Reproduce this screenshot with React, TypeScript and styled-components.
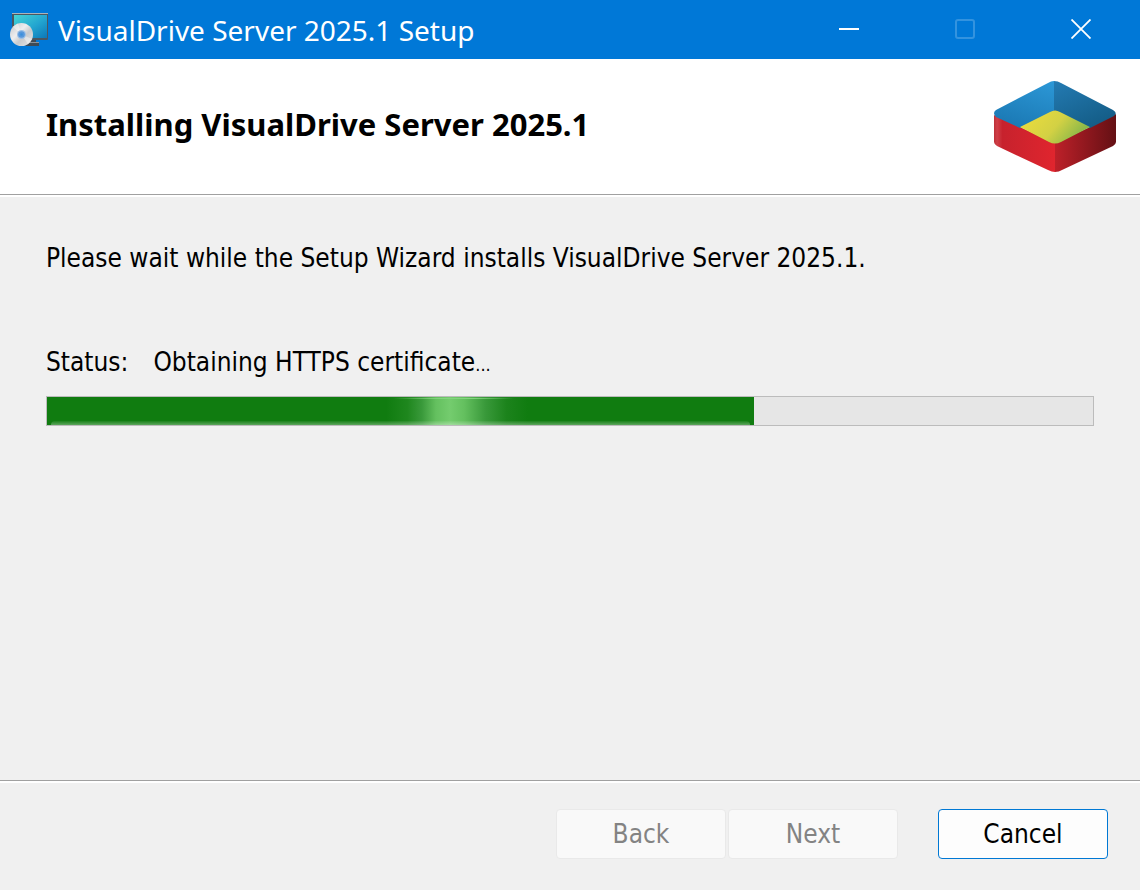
import React from "react";
import styled, { createGlobalStyle } from "styled-components";

const GlobalStyle = createGlobalStyle`
  * { box-sizing: border-box; }
  body { margin: 0; background: #f0f0f0; }
`;

const uiFont = `"DejaVu Sans Condensed", "DejaVu Sans", Tahoma, sans-serif`;

const Window = styled.div`
  display: flex;
  flex-direction: column;
  min-height: 100vh;
  background: #f0f0f0;
  color: #000;
  font-family: ${uiFont};
  font-size: 26px;
  line-height: 32px;
`;

const TitleBar = styled.header`
  display: flex;
  align-items: center;
  height: 59px;
  padding: 0 1px 0 10px;
  background: #0078d7;
  color: #fff;
`;

const Title = styled.span`
  flex: 1;
  padding-left: 10px;
  font-family: "Noto Sans", "Open Sans", sans-serif;
  font-size: 28px;
  line-height: 40px;
  white-space: nowrap;
`;

const CaptionButton = styled.button`
  display: flex;
  align-items: center;
  justify-content: center;
  width: 116px;
  height: 58px;
  padding: 0 0 2px;
  border: 0;
  background: transparent;
  color: #fff;

  &:disabled { color: #3393df; }
`;

const Banner = styled.section`
  display: flex;
  align-items: center;
  justify-content: space-between;
  height: 136px;
  padding: 0 24px 0 46px;
  background: #fff;
  border-bottom: 1px solid #a0a0a0;
`;

const Heading = styled.h1`
  margin: 0;
  padding-bottom: 6px;
  font-family: "Noto Sans", Tahoma, sans-serif;
  font-size: 31px;
  line-height: 36px;
  font-weight: 700;
`;

const Body = styled.main`
  flex: 1;
  padding: 45px 46px 0;
  border-top: 2px solid #fff;
`;

const Message = styled.p`
  margin: 0 0 72px;
`;

const StatusRow = styled.div`
  display: flex;
  gap: 25px;
  height: 32px;
  margin-bottom: 18px;
`;

const SmallDots = styled.span`
  font-size: 18px;
`;

const Track = styled.div`
  height: 30px;
  border: 1px solid #bcbcbc;
  background: #e6e6e6;
`;

const Fill = styled.div`
  display: flex;
  flex-direction: column;
  justify-content: space-between;
  height: 100%;
  background:
    linear-gradient(90deg, #107c10 48%, #1f871e 51%, #39993a 53%, #64c05f 55%, #74cc6e 57%, #64c05f 59%, #39993a 62%, #1c831c 65%, #107c10 68%);
`;

const TopGlint = styled.div`
  height: 2px;
  border-bottom: 1px solid;
  border-image: linear-gradient(90deg, transparent 49%, #83d47e 56%, #83d47e 60%, transparent 66%) 1;
`;

const BottomGlow = styled.div`
  height: 4px;
  margin: 0 4px;
  border-radius: 6px 6px 0 0;
  background: linear-gradient(rgba(255, 255, 255, 0.05), rgba(255, 255, 255, 0.32));
`;

const Footer = styled.footer`
  border-top: 1px solid #a0a0a0;
`;

const Actions = styled.div`
  display: flex;
  justify-content: flex-end;
  padding: 26px 32px 31px;
  border-top: 2px solid #fff;
`;

const ButtonPair = styled.div`
  display: flex;
  gap: 2px;
  margin-right: 40px;
`;

const WizardButton = styled.button`
  width: 170px;
  height: 50px;
  padding: 0;
  border: 1px solid #0078d4;
  border-radius: 4px;
  background: #fdfdfd;
  color: #000;
  font: inherit;

  &:disabled {
    border-color: #e9e9e9;
    background: #f9f9f9;
    color: #838383;
  }
`;

function SetupIcon() {
  return (
    <svg width="38" height="34" viewBox="0 0 38 34" aria-hidden="true">
      <defs>
        <linearGradient id="screen" x1="0" y1="0" x2="1" y2="1">
          <stop offset="0" stopColor="#45d5d5" />
          <stop offset="0.55" stopColor="#23a5d0" />
          <stop offset="1" stopColor="#0c78b8" />
        </linearGradient>
        <linearGradient id="disc" x1="0" y1="0" x2="1" y2="1">
          <stop offset="0" stopColor="#c4c6ca" />
          <stop offset="0.4" stopColor="#eeeeef" />
          <stop offset="0.6" stopColor="#c8cacd" />
          <stop offset="1" stopColor="#e8e8e8" />
        </linearGradient>
      </defs>
      <rect x="2" y="0" width="36" height="27" rx="1" fill="#4b5660" />
      <rect x="2" y="0" width="36" height="1" fill="#aab3bb" />
      <rect x="4" y="2" width="33" height="23" fill="url(#screen)" />
      <path d="M20 27h6v2h3v4H15z" fill="#3e4b56" />
      <path d="M20 29h9v1h-9z" fill="#87939d" />
      <circle cx="11.500" cy="21.500" r="11.500" fill="url(#disc)" />
      <path d="M11.500 21.500L3 14A11.500 11.500 0 0 1 8 10.500zM11.500 21.500L22 26A11.500 11.500 0 0 1 18 31z" fill="#fff" opacity="0.4" />
      <circle cx="11.500" cy="21.500" r="4.500" fill="#9cc0e6" />
      <circle cx="11.500" cy="21.500" r="3.300" fill="#5798dc" />
      <circle cx="11.500" cy="21.500" r="1.300" fill="#3c90dc" />
    </svg>
  );
}

function ProductLogo() {
  return (
    <svg width="122" height="92" viewBox="0 0 122 92" role="img" aria-label="VisualDrive">
      <defs>
        <linearGradient id="blueLeft" x1="0.8" y1="0" x2="0.4" y2="1">
          <stop offset="0" stopColor="#2b96d5" />
          <stop offset="1" stopColor="#1b79b4" />
        </linearGradient>
        <linearGradient id="blueRight" x1="0" y1="0" x2="0.6" y2="1">
          <stop offset="0" stopColor="#247bb3" />
          <stop offset="1" stopColor="#145d87" />
        </linearGradient>
        <linearGradient id="redLeft">
          <stop offset="0" stopColor="#bd3038" />
          <stop offset="0.05" stopColor="#cf3f47" />
          <stop offset="0.14" stopColor="#c7222d" />
          <stop offset="1" stopColor="#e0252e" />
        </linearGradient>
        <linearGradient id="redRight">
          <stop offset="0" stopColor="#bd2029" />
          <stop offset="1" stopColor="#641014" />
        </linearGradient>
        <linearGradient id="floor" x1="0" y1="0.3" x2="1" y2="0.7">
          <stop offset="0" stopColor="#ebdc3d" />
          <stop offset="0.5" stopColor="#d3d144" />
          <stop offset="1" stopColor="#77b14a" />
        </linearGradient>
      </defs>
      <path d="M0 34L26 46L61 62V91Q58 91 54 89L3 65Q0 63 0 61z" fill="url(#redLeft)" />
      <path d="M61 62L96 46L122 33V61Q122 63 119 65L68 89Q65 91 61 91z" fill="url(#redRight)" />
      <path d="M60 0V33L26 47L2 36Q-2 32 2 29L54 2Q57 0 60 0z" fill="url(#blueLeft)" />
      <path d="M60 0Q64 0 67 2L119 29Q124 32 120 35L96 47L60 32z" fill="url(#blueRight)" />
      <path d="M26 46L56 31Q61 28 66 31L96 46L67 61Q61 64 55 61z" fill="url(#floor)" />
    </svg>
  );
}

export default function App() {
  return (
    <Window>
      <GlobalStyle />
      <TitleBar>
        <SetupIcon />
        <Title>VisualDrive Server 2025.1 Setup</Title>
        <CaptionButton aria-label="Minimize">
          <svg width="20" height="20" viewBox="0 0 20 20"><path d="M0 10h20" stroke="currentColor" strokeWidth="2" /></svg>
        </CaptionButton>
        <CaptionButton aria-label="Maximize" disabled>
          <svg width="20" height="20" viewBox="0 0 20 20"><rect x="1" y="1" width="18" height="18" rx="2" fill="none" stroke="currentColor" strokeWidth="2" /></svg>
        </CaptionButton>
        <CaptionButton aria-label="Close">
          <svg width="20" height="20" viewBox="0 0 20 20"><path d="M.5.500l19 19M19.500.500l-19 19" stroke="currentColor" strokeWidth="1.800" /></svg>
        </CaptionButton>
      </TitleBar>
      <Banner>
        <Heading>Installing VisualDrive Server 2025.1</Heading>
        <ProductLogo />
      </Banner>
      <Body>
        <Message>Please wait while the Setup Wizard installs VisualDrive Server 2025.1.</Message>
        <StatusRow>
          <span>Status:</span>
          <span>Obtaining HTTPS certificate<SmallDots>...</SmallDots></span>
        </StatusRow>
        <Track role="progressbar" aria-label="Installation progress" aria-valuemin={0} aria-valuemax={1046} aria-valuenow={707}>
          <Fill style={{ width: `${(707 / 1046) * 100}%` }}>
            <TopGlint />
            <BottomGlow />
          </Fill>
        </Track>
      </Body>
      <Footer>
        <Actions>
          <ButtonPair>
            <WizardButton disabled>Back</WizardButton>
            <WizardButton disabled>Next</WizardButton>
          </ButtonPair>
          <WizardButton>Cancel</WizardButton>
        </Actions>
      </Footer>
    </Window>
  );
}
